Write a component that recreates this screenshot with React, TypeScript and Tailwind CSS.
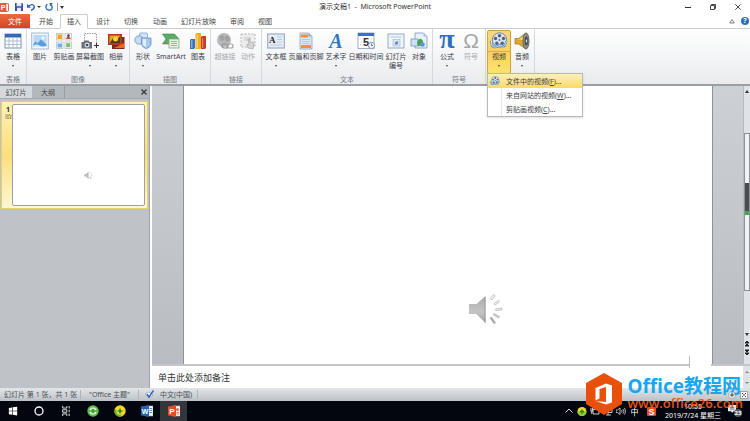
import type { ReactNode } from "react"
import clsx from "clsx"

type Tool = {
  label: string
  icon: ReactNode
  width: string
  arrow?: boolean
  disabled?: boolean
  active?: boolean
}

type Group = {
  name: string
  padding: string
  tools: Tool[]
}

const TableIcon = () => (
  <svg viewBox="0 0 18 18" className="h-full w-full">
    <rect x="1" y="2" width="16" height="14" fill="#fff" stroke="#7f93b8" />
    <rect x="1" y="2" width="16" height="3.5" fill="#3566b8" />
    <path d="M1 9h16M1 12.500h16M5 5.500v10.500M9 5.500v10.500M13 5.500v10.500" stroke="#9fb0cc" strokeWidth=".8" />
  </svg>
)

const PictureIcon = () => (
  <svg viewBox="0 0 18 18" className="h-full w-full">
    <rect x=".7" y="1" width="16.600" height="16" fill="#f2f6fa" stroke="#a9bccf" />
    <rect x="2.500" y="3" width="13" height="12" fill="#b4daf5" />
    <path d="M2.500 12l2-2.500 2 2 3.500-4 5.500 5v2.500h-13z" fill="#5b9bd8" />
    <path d="M2.500 13.500q3-2 6 0t7 0v1.500h-13z" fill="#dcecf8" />
    <circle cx="12" cy="6" r="1.500" fill="#fff" />
  </svg>
)

const ClipArtIcon = () => (
  <svg viewBox="0 0 18 18" className="h-full w-full">
    <g fill="#f7f8fa" stroke="#b4bac4" strokeWidth=".7">
      <rect x="1.500" y="1.500" width="6.500" height="6.500" />
      <rect x="10" y="1.500" width="6.500" height="6.500" />
      <rect x="1.500" y="10" width="6.500" height="6.500" />
      <rect x="10" y="10" width="6.500" height="6.500" />
    </g>
    <rect x="2.500" y="2.500" width="4.500" height="4.500" fill="#f0a818" />
    <path d="M11 7l2-4 3 4z" fill="#c0502c" />
    <circle cx="13.500" cy="3.500" r="1.200" fill="#404858" />
    <rect x="2.500" y="11.500" width="4.500" height="4" fill="#6fb0e4" />
    <rect x="11.200" y="11.200" width="4" height="4" fill="#7cbf6a" />
  </svg>
)

const ScreenshotIcon = () => (
  <svg viewBox="0 0 18 18" className="h-full w-full">
    <path d="M3.500 9V1.500h12V11" fill="none" stroke="#777" strokeWidth=".7" strokeDasharray="1.500 1" />
    <path d="M15.500 11v5M13 13.500h5" stroke="#333" strokeWidth="1.100" />
    <path d="M.5 10h2l1-1.500h4L8.500 10H11v6.500H.5z" fill="#6b7078" />
    <circle cx="6" cy="13" r="2.500" fill="#d7dde5" />
    <circle cx="6" cy="13" r="1.300" fill="#3e4d66" />
  </svg>
)

const AlbumIcon = () => (
  <svg viewBox="0 0 18 18" className="h-full w-full">
    <path d="M5 5h12.500v12H5z" fill="#7a2c14" />
    <path d="M1 2h14v11H1z" fill="#b5361c" />
    <path d="M2.500 3.500h11v8h-11z" fill="#e8a31c" />
    <path d="M2.500 11.500l4-6 3 3 4-5v8z" fill="#4a3a20" />
    <circle cx="8.500" cy="7" r="2.500" fill="#f9d331" />
    <path d="M7 16l10-5v5z" fill="#e46b1f" />
  </svg>
)

const ShapesIcon = () => (
  <svg viewBox="0 0 18 18" className="h-full w-full">
    <rect x="5.500" y="1" width="8" height="8" rx="1" fill="#d3e3f4" stroke="#7fa3cd" strokeWidth=".8" />
    <circle cx="5" cy="8" r="4.200" fill="#c4daf2" stroke="#6d97c8" strokeWidth=".8" />
    <path d="M7.500 6h9.500v6.500q-1 3-4.700 4.200-3.800-1.200-4.800-4.200z" fill="#a9c9ec" stroke="#5d8ac0" strokeWidth=".8" />
    <path d="M8.700 7h3.300v8q-2.800-1-3.300-3z" fill="#e2eefb" />
  </svg>
)

const SmartArtIcon = () => (
  <svg viewBox="0 0 18 18" className="h-full w-full">
    <path d="M.5 2h12l4.500 5-4.500 5H.5L4 7z" fill="#55ac63" stroke="#34894a" strokeWidth=".6" />
    <rect x="7" y="7" width="10" height="9" fill="#e7f2e5" stroke="#7eaa84" strokeWidth=".8" />
    <path d="M9 9.500h6M9 11.500h6M9 13.500h6" stroke="#86b58a" strokeWidth=".9" />
  </svg>
)

const ChartIcon = () => (
  <svg viewBox="0 0 18 18" className="h-full w-full">
    <path d="M1 8l1-1h4v9l-1 1H1z" fill="#3a6fc4" />
    <path d="M6.500 2l1-1H12v15l-1 1H6.500z" fill="#f0b01e" />
    <path d="M12 5l1-1h4v12l-1 1h-4z" fill="#c93a22" />
    <path d="M2 8h1.500v8H2zM7.500 3H9v13H7.500zM13 6h1.200v10H13z" fill="#fff" opacity=".4" />
  </svg>
)

const LinkIcon = () => (
  <svg viewBox="0 0 18 18" className="h-full w-full">
    <circle cx="8" cy="8" r="7" fill="#b8b8b8" />
    <path d="M3 5q4-4 5 0t-3 4zM9 4q4-1 5 4l-3 2q-3-2-2-6z" fill="#a2a2a2" />
    <rect x="6" y="12" width="6" height="4" rx="2" fill="none" stroke="#8d8d8d" strokeWidth="1.200" />
    <rect x="11" y="12" width="6" height="4" rx="2" fill="none" stroke="#a3a3a3" strokeWidth="1.200" />
  </svg>
)

const ActionIcon = () => (
  <svg viewBox="0 0 18 18" className="h-full w-full">
    <rect x="2" y="2" width="14" height="13" fill="#ededed" stroke="#b5b5b5" strokeDasharray="2 1.500" />
    <path d="M5 6h7M5 8h7" stroke="#c4c4c4" />
    <path d="M9 7l1 6-2-1 1 4 5 1 1-6-4-1V7z" fill="#d6d6d6" stroke="#a8a8a8" strokeWidth=".7" />
  </svg>
)

const TextBoxIcon = () => (
  <svg viewBox="0 0 18 18" className="h-full w-full">
    <rect x=".7" y="2" width="16.600" height="14" fill="#e6edf6" stroke="#8ba0bd" />
    <text x="2" y="11" fontSize="9" fontWeight="700" fontFamily="Liberation Serif, serif" fill="#222">A</text>
    <path d="M10 5h5M10 7.500h5M10 10h5M3 13h12" stroke="#b5c2d4" strokeWidth=".8" />
  </svg>
)

const HeaderFooterIcon = () => (
  <svg viewBox="0 0 18 18" className="h-full w-full">
    <path d="M3 1h8.500L15 4.500V17H3z" fill="#dbe6f3" stroke="#8ca2c0" strokeWidth=".8" />
    <path d="M4 2.500h7v3H4zM4 13h10v3H4z" fill="#ef9238" />
    <path d="M5 7.500h8M5 9.500h8M5 11.500h8" stroke="#a9bad0" strokeWidth=".7" />
    <path d="M11.500 1v3.500H15z" fill="#8ca6c8" />
  </svg>
)

const WordArtIcon = () => (
  <svg viewBox="0 0 18 18" className="h-full w-full overflow-visible">
    <text x="9" y="16" textAnchor="middle" fontSize="20" fontWeight="700" fontStyle="italic" fontFamily="Liberation Serif, serif" fill="#2f77c6">A</text>
  </svg>
)

const DateIcon = () => (
  <svg viewBox="0 0 18 18" className="h-full w-full">
    <rect x="1" y="1" width="16" height="15.500" fill="#fff" stroke="#8b9cb8" strokeWidth=".8" />
    <rect x="1" y="1" width="16" height="3" fill="#3b6fc2" />
    <path d="M3 7h12M3 10h12M3 13h12" stroke="#d8dee8" strokeWidth=".7" />
    <text x="6" y="14" fontSize="11" fontWeight="700" fontFamily="Liberation Sans, sans-serif" fill="#2b2f38">5</text>
    <circle cx="14.500" cy="13.500" r="3.200" fill="#eef2f8" stroke="#76839a" strokeWidth=".8" />
    <path d="M14.500 11.500v2h1.500" fill="none" stroke="#445" strokeWidth=".7" />
  </svg>
)

const SlideNumberIcon = () => (
  <svg viewBox="0 0 18 18" className="h-full w-full">
    <rect x="1" y="2" width="16" height="14" fill="#f1f5fa" stroke="#8ba3c6" strokeWidth=".9" />
    <path d="M3.500 5h11" stroke="#b7c6da" />
    <rect x="6" y="7.500" width="7" height="6.500" fill="#dbe6f4" stroke="#9db4d6" strokeWidth=".6" />
    <text x="9.500" y="13" textAnchor="middle" fontSize="6" fontWeight="700" fontFamily="Liberation Sans, sans-serif" fill="#305fae">#</text>
  </svg>
)

const ObjectIcon = () => (
  <svg viewBox="0 0 18 18" className="h-full w-full">
    <path d="M5 1h8.500L17 4.500V16H5z" fill="#e9f0f8" stroke="#7f98ba" strokeWidth=".8" />
    <path d="M13.500 1v3.500H17z" fill="#a8bedb" />
    <rect x="1" y="7" width="7" height="7" fill="#cfe2f4" stroke="#6f99c8" strokeWidth=".8" />
    <path d="M7 10q3-6 6-1 0 4-3 5t-3-4z" fill="#49a04f" />
    <circle cx="12.500" cy="12.500" r="2.300" fill="#5c93d4" />
  </svg>
)

const PiIcon = () => (
  <svg viewBox="0 0 18 18" className="h-full w-full overflow-visible">
    <text x="9" y="16" textAnchor="middle" fontSize="28" fontWeight="700" fontFamily="Liberation Serif, serif" fill="#2b73c2">π</text>
  </svg>
)

const OmegaIcon = () => (
  <svg viewBox="0 0 18 18" className="h-full w-full overflow-visible">
    <text x="9" y="16" textAnchor="middle" fontSize="21" fontFamily="Liberation Sans, sans-serif" fill="#a5a5a5">Ω</text>
  </svg>
)

const VideoIcon = () => (
  <svg viewBox="0 0 18 18" className="h-full w-full">
    <circle cx="9.500" cy="8" r="7.200" fill="#dce4ef" stroke="#6b7c98" strokeWidth=".9" />
    <g fill="#4e6388">
      <circle cx="9.500" cy="3.700" r="1.700" />
      <circle cx="13.500" cy="6.500" r="1.700" />
      <circle cx="12.200" cy="11.200" r="1.700" />
      <circle cx="6.800" cy="11.200" r="1.700" />
      <circle cx="5.500" cy="6.500" r="1.700" />
      <circle cx="9.500" cy="8" r=".9" />
    </g>
    <path d="M1.500 9q-1 7 5 6 4-3 6-1t4-5" fill="none" stroke="#3d87c9" strokeWidth="2.200" />
    <path d="M1.500 9q-1 7 5 6 4-3 6-1t4-5" fill="none" stroke="#d4e8f7" strokeWidth="1" />
  </svg>
)

const AudioIcon = () => (
  <svg viewBox="0 0 18 18" className="h-full w-full">
    <path d="M2 6.500h3.500L13 1v16l-7.500-5H2z" fill="#dca92d" stroke="#9b762a" strokeWidth=".7" />
    <path d="M3 7.500h3l6-4.500v5z" fill="#f8dd86" />
    <ellipse cx="13" cy="9" rx="3" ry="8" fill="#8f8f8f" stroke="#555" strokeWidth=".8" />
    <ellipse cx="13.300" cy="9" rx="1.600" ry="4.500" fill="#4a4a4a" />
    <ellipse cx="13.500" cy="9" rx=".7" ry="1.800" fill="#ddd" />
  </svg>
)

const SpeakerIcon = ({ className }: { className?: string }) => (
  <svg viewBox="0 0 36 36" className={className}>
    <defs>
      <linearGradient id="cone" x1="0" y1="0" x2="0" y2="1">
        <stop offset="0" stopColor="#adadad" />
        <stop offset=".6" stopColor="#c4c4c4" />
        <stop offset="1" stopColor="#9c9c9c" />
      </linearGradient>
    </defs>
    <path d="M1 12h7.500L17.500 4v27L8.500 22H1z" fill="url(#cone)" />
    <path d="M17 5v25.500" stroke="#999" />
    <g fill="#f4f4f4" stroke="#b8b8b8" strokeWidth=".8">
      <path d="M22 6.500l3.500-4 1.500 1-3 4.500z" />
      <path d="M26 11.500l4.500-3 1 1.500-4.500 3z" />
      <path d="M27.500 17l6-1 .3 2-6 .5z" />
      <path d="M26 21.500l5.500 3-1 1.500-5-3z" fill="#ccc" />
      <path d="M22 26l1.500-.8 4 5.500-1.500 1z" fill="#999" />
    </g>
  </svg>
)

const tabs = ["开始", "插入", "设计", "切换", "动画", "幻灯片放映", "审阅", "视图"]

const groups: Group[] = [
  {
    name: "表格",
    padding: "px-px",
    tools: [{ label: "表格", icon: <TableIcon />, width: "w-6", arrow: true }],
  },
  {
    name: "图像",
    padding: "px-px",
    tools: [
      { label: "图片", icon: <PictureIcon />, width: "w-6" },
      { label: "剪贴画", icon: <ClipArtIcon />, width: "w-6" },
      { label: "屏幕截图", icon: <ScreenshotIcon />, width: "w-7", arrow: true },
      { label: "相册", icon: <AlbumIcon />, width: "w-6", arrow: true },
    ],
  },
  {
    name: "插图",
    padding: "px-px",
    tools: [
      { label: "形状", icon: <ShapesIcon />, width: "w-6", arrow: true },
      { label: "SmartArt", icon: <SmartArtIcon />, width: "w-8" },
      { label: "图表", icon: <ChartIcon />, width: "w-[22px]" },
    ],
  },
  {
    name: "链接",
    padding: "px-0.5",
    tools: [
      { label: "超链接", icon: <LinkIcon />, width: "w-6", disabled: true },
      { label: "动作", icon: <ActionIcon />, width: "w-[22px]", disabled: true },
    ],
  },
  {
    name: "文本",
    padding: "px-0.5",
    tools: [
      { label: "文本框", icon: <TextBoxIcon />, width: "w-6", arrow: true },
      { label: "页眉和页脚", icon: <HeaderFooterIcon />, width: "w-9" },
      { label: "艺术字", icon: <WordArtIcon />, width: "w-6", arrow: true },
      { label: "日期和时间", icon: <DateIcon />, width: "w-9" },
      { label: "幻灯片编号", icon: <SlideNumberIcon />, width: "w-6" },
      { label: "对象", icon: <ObjectIcon />, width: "w-[22px]" },
    ],
  },
  {
    name: "符号",
    padding: "px-0.5",
    tools: [
      { label: "公式", icon: <PiIcon />, width: "w-6", arrow: true },
      { label: "符号", icon: <OmegaIcon />, width: "w-6", disabled: true },
    ],
  },
]

const videoMenu = [
  { text: "文件中的视频", hotkey: "F", active: true },
  { text: "来自网站的视频", hotkey: "W" },
  { text: "剪贴画视频", hotkey: "C" },
]

const ToolButton = ({ label, icon, width, arrow, disabled, active }: Tool) => (
  <button
    type="button"
    disabled={disabled}
    className={clsx(
      "flex h-11 shrink-0 flex-col items-center rounded-xs border pt-px",
      width,
      active ? "border-[#d3a03a] bg-linear-to-b from-[#fbd77c] via-[#fbd05f] to-[#fde46e]" : "border-transparent",
      disabled ? "text-[#a5a8ad]" : "text-[#3c4047]"
    )}
  >
    <span className={clsx("flex h-5 w-full justify-center border-b", active ? "border-[#dcae45]" : "border-transparent")}>
      <span className="block size-[18px] shrink-0">{icon}</span>
    </span>
    <span className={clsx("flex justify-center text-center leading-[9px]", label === "幻灯片编号" ? "w-[22px] shrink-0" : "whitespace-nowrap")}>
      {label}
    </span>
    {arrow && <span className="mt-1 border-x border-t-2 border-x-transparent border-t-[#444]" />}
  </button>
)

const TitleBar = () => (
  <header className="relative flex h-[14px] shrink-0 items-center bg-white">
    <div className="flex items-center gap-1">
      <svg viewBox="0 0 10 10" className="mr-0.5 size-[9px]">
        <rect x=".5" y=".5" width="9" height="9" rx="1" fill="#fff" stroke="#d24a26" />
        <rect width="7" height="10" rx="1" fill="#dd5a35" />
        <text x="3.500" y="8" textAnchor="middle" fontSize="8" fontWeight="700" fontFamily="Liberation Sans, sans-serif" fill="#fff">P</text>
      </svg>
      <button type="button" aria-label="保存">
        <svg viewBox="0 0 10 10" className="size-2">
          <path d="M0 0h9l1 1v9H0z" fill="#3a4fa8" />
          <path d="M2 0h6v4H2zM2.500 6h5v4h-5z" fill="#e6eaf6" />
        </svg>
      </button>
      <button type="button" aria-label="撤消" className="flex items-center gap-0.5">
        <svg viewBox="0 0 10 10" className="size-2">
          <path d="M2 4q5-4 7 0 .5 4-4 5" fill="none" stroke="#2d5fb8" strokeWidth="1.800" />
          <path d="M0 1v5h5z" fill="#2d5fb8" />
        </svg>
        <span className="border-x-2 border-t-2 border-x-transparent border-t-[#333]" />
      </button>
      <button type="button" aria-label="恢复">
        <svg viewBox="0 0 10 10" className="size-2">
          <path d="M3 1.500Q0 4 2 7.500q3.500 3 6.500 0Q10 4 7 2" fill="none" stroke="#2d6fc4" strokeWidth="1.700" />
          <path d="M5.500 0H10L6.500 4z" fill="#2d6fc4" />
        </svg>
      </button>
      <span className="flex h-2 items-center border-l border-[#999] pl-0.5">
        <span className="border-x-2 border-t-[3px] border-x-transparent border-t-[#333]" />
      </span>
    </div>
    <h1 className="absolute inset-x-0 text-center text-[7px] leading-[14px] text-[#333]">演示文稿1&nbsp; -&nbsp; Microsoft PowerPoint</h1>
    <div className="relative ml-auto flex items-center gap-[19px] pr-[9px]">
      <button type="button" aria-label="最小化" className="h-px w-1.5 bg-[#333]" />
      <button type="button" aria-label="还原">
        <svg viewBox="0 0 6 6" className="size-1.5">
          <path d="M.5 1.500h4v4h-4zM1.500 1.500v-1h4v4h-1" fill="none" stroke="#333" strokeWidth=".9" />
        </svg>
      </button>
      <button type="button" aria-label="关闭">
        <svg viewBox="0 0 6 6" className="size-1.5">
          <path d="M.3.3l5.400 5.400M5.700.3L.3 5.700" stroke="#333" strokeWidth=".9" />
        </svg>
      </button>
    </div>
  </header>
)

const TabRow = () => (
  <nav className="flex h-[15px] shrink-0 items-stretch border-b border-[#c9ccd1] bg-white text-[#444]">
    <button type="button" className="mr-0.5 w-[30px] bg-linear-to-b from-[#ea6a43] to-[#d4431c] text-white">文件</button>
    {tabs.map((tab) => (
      <button
        key={tab}
        type="button"
        className={clsx(
          "border px-[6px]",
          tab === "插入" ? "mr-px -mb-px rounded-t-xs border-[#c9ccd1] border-b-white bg-white" : "border-transparent",
          tab === "动画" && "ml-px"
        )}
      >
        {tab}
      </button>
    ))}
    <div className="ml-auto flex items-center gap-1.5 pr-px">
      <svg viewBox="0 0 6 6" className="size-1.5">
        <path d="M.8 5L3 1.500 5.200 5z" fill="none" stroke="#666" strokeWidth=".8" />
      </svg>
      <button type="button" aria-label="帮助" className="size-2 rounded-full bg-[#2f6fcb] text-[7px] leading-2 font-bold text-white">?</button>
    </div>
  </nav>
)

const VideoMenu = () => (
  <div role="menu" className="absolute top-[43px] left-0 z-20 w-24 border border-[#b5b8be] bg-white shadow-sm">
    {videoMenu.map((item) => (
      <button
        key={item.text}
        type="button"
        role="menuitem"
        className={clsx(
          "flex h-[14px] w-full items-center text-[#3c4047]",
          item.active && "bg-linear-to-b from-[#fdf0b8] to-[#fbd966]"
        )}
      >
        <span className={clsx("flex h-full w-[14px] items-center justify-center", !item.active && "border-r border-[#e3e5e8]")}>
          {item.active && <span className="size-[10px]"><VideoIcon /></span>}
        </span>
        <span className="ml-1">{item.text}(<u>{item.hotkey}</u>)...</span>
      </button>
    ))}
  </div>
)

const Ribbon = () => (
  <section className="flex h-[57px] shrink-0 items-stretch border-b-2 border-[#9a9fa6] bg-linear-to-b from-white to-[#e9ebee]">
    {groups.map((group) => (
      <div key={group.name} className={clsx("flex flex-col border-r border-[#d5d8dc]", group.padding)}>
        <div className="flex pt-px">
          {group.tools.map((tool) => <ToolButton key={tool.label} {...tool} />)}
        </div>
        <p className="mt-auto text-center leading-[11px] text-[#777b82]">{group.name}</p>
      </div>
    ))}
    <div className="border-r border-[#d5d8dc] px-px pt-px">
      <div className="relative flex">
        <ToolButton label="视频" icon={<VideoIcon />} width="w-6" arrow active />
        <ToolButton label="音频" icon={<AudioIcon />} width="w-[22px]" arrow />
        <VideoMenu />
      </div>
    </div>
  </section>
)

const SlidePanel = () => (
  <aside className="flex w-[150px] shrink-0 flex-col border-r border-[#9ea3a8] bg-[#bfc3c7]">
    <div className="flex h-[13px] items-stretch border-b border-[#a4a9ae] bg-[#b3b8bd] text-[#444]">
      <button type="button" className="w-8 bg-[#d5d9dd]">幻灯片</button>
      <button type="button" className="w-[33px] border-r border-[#9a9fa4]">大纲</button>
      <button type="button" aria-label="关闭窗格" className="mr-0.5 ml-auto">
        <svg viewBox="0 0 6 6" className="size-1.5">
          <path d="M.5.500l5 5M5.500.500l-5 5" stroke="#333" strokeWidth="1.200" />
        </svg>
      </button>
    </div>
    <div className="mx-px mt-0.5 flex border border-[#e9cf6a] bg-linear-to-b from-[#fff3b4] via-[#fbdf7c] to-[#fff8d0] p-0.5">
      <div className="flex w-2 shrink-0 flex-col items-center pt-px text-[#333]">
        <span className="leading-[9px] font-bold">1</span>
        <svg viewBox="0 0 8 6" className="h-[5px] w-[7px]">
          <path d="M0 1h3M0 3h2M0 5h3M5 0l1 2h2L6.500 3.500 7 6 5 4.500 3 6l.5-2.500L2.500 2h2z" fill="none" stroke="#555" strokeWidth=".6" />
        </svg>
      </div>
      <div className="flex h-[102px] flex-1 items-start rounded-xs border border-[#9da0a6] bg-white">
        <SpeakerIcon className="mt-[66px] ml-[71px] size-[9px]" />
      </div>
    </div>
  </aside>
)

const ScrollBar = () => (
  <div className="flex w-[7px] shrink-0 flex-col items-center border-l border-[#b5b9be] bg-[#dfe3e8] text-[#333]">
    <span className="mt-1 border-x-2 border-b-[3px] border-x-transparent border-b-[#333]" />
    <div className="mt-10 flex w-full flex-1 flex-col border border-[#8c9299] bg-[#f0f2f6]">
      <div className="mt-[49px] h-8 w-full border-b-4 border-[#3fa653] bg-[#4a4c50]" />
    </div>
    <span className="mt-[42px] border-x-2 border-t-[3px] border-x-transparent border-t-[#333]" />
    <svg viewBox="0 0 6 16" className="mt-1 mb-2 h-4 w-1.5">
      <path d="M1 3l2-2 2 2zM1 6l2-2 2 2zM1 10h4l-2 2zM1 13h4l-2 2z" fill="#222" stroke="#222" />
    </svg>
  </div>
)

const Editor = () => (
  <main className="flex min-w-0 flex-1 flex-col border-l-2 border-white">
    <div className="flex min-h-0 flex-1">
      <div className="flex min-w-0 flex-1 bg-linear-to-b from-[#cdd1d5] to-[#b9bdc1] pr-[30px] pl-[31px]">
        <div className="flex flex-1 items-end justify-end border-x border-[#8e9297] bg-white">
          <SpeakerIcon className="mr-[208px] mb-9 size-9" />
        </div>
      </div>
      <ScrollBar />
    </div>
    <div className="relative flex h-6 shrink-0 border-t-2 border-[#c3c6ca] bg-white">
      <textarea
        aria-label="备注"
        defaultValue="单击此处添加备注"
        className="h-full w-full resize-none overflow-hidden px-1.5 pt-[5px] text-[9px] leading-[14px] text-[#333] outline-none"
      />
      <div className="flex w-[7px] shrink-0 flex-col items-center justify-around bg-[#dfe3e8]">
        <span className="border-x-2 border-b-2 border-x-transparent border-b-[#888]" />
        <span className="border-x-2 border-t-2 border-x-transparent border-t-[#888]" />
      </div>
      <span className="absolute right-[39px] bottom-[20px] h-3 w-[22px] border-l border-[#b9bcc0] bg-white" />
    </div>
  </main>
)

const StatusBar = () => (
  <footer className="flex h-[13px] shrink-0 items-center bg-linear-to-b from-[#e3e6e9] to-[#bcc1c6] pl-1 text-[#4b4f55]">
    <span className="w-[77px] border-r border-[#b0b4b9] whitespace-nowrap">幻灯片 第 1 张，共 1 张</span>
    <span className="w-[58px] border-r border-[#b0b4b9] text-center">"Office 主题"</span>
    <span className="flex w-[59px] items-center gap-1.5 border-r border-[#b0b4b9] pl-1.5">
      <svg viewBox="0 0 9 9" className="size-[9px] shrink-0">
        <path d="M0 4l4-2 4 3-4 3z" fill="#fff" stroke="#7f8fae" strokeWidth=".6" />
        <path d="M2 4l2 3 4.500-6.500" fill="none" stroke="#2f5fc0" strokeWidth="1.400" />
      </svg>
      <span className="whitespace-nowrap">中文(中国)</span>
    </span>
    <span className="ml-auto flex items-center gap-1 pr-0.5">
      <svg viewBox="0 0 8 8" className="size-2">
        <circle cx="4" cy="4" r="3.500" fill="#f4f4f4" stroke="#888" strokeWidth=".6" />
        <path d="M2 4h4M4 2v4" stroke="#444" />
      </svg>
      <svg viewBox="0 0 8 8" className="size-2">
        <rect x=".5" y=".5" width="7" height="7" fill="#fff" stroke="#888" strokeWidth=".7" />
        <path d="M2 2l1.500 1.500M6 2L4.500 3.500M2 6l1.500-1.500M6 6L4.500 4.500" stroke="#444" />
      </svg>
    </span>
  </footer>
)

const launchers = [
  {
    name: "开始",
    icon: <path d="M1 2.300l4-.6v4H1zM5.700 1.600L11 .8v4.900H5.700zM1 6.400h4v4l-4-.6zM5.700 6.400H11v4.900l-5.300-.8z" fill="#fff" />,
  },
  { name: "Cortana", icon: <circle cx="6" cy="6" r="4" fill="none" stroke="#fff" strokeWidth="1.300" /> },
  {
    name: "任务视图",
    icon: <path d="M2 0v2.500h5V0M2 12V9.500h5V12M2 4.500h5v3H2zM9.800 0v3M9.800 4.500v3M9.800 9v3" fill="none" stroke="#eee" strokeWidth="1.100" />,
  },
  {
    name: "浏览器",
    icon: (
      <>
        <circle cx="6" cy="6" r="5.700" fill="#5cc044" />
        <circle cx="6" cy="6" r="3.600" fill="#f2fbef" />
        <path d="M2 6h8M4.500 4.500h3M4.500 7.500h3" stroke="#43a332" strokeWidth="1.300" />
      </>
    ),
  },
  {
    name: "安全卫士",
    icon: (
      <>
        <circle cx="6" cy="6" r="5.700" fill="#f6d21c" />
        <path d="M.3 6a5.700 5.700 0 005.700 5.700L9 8 3 4z" fill="#54b13b" />
        <circle cx="6" cy="6" r="3.700" fill="#f6df2e" />
        <path d="M6 3.500v5M3.500 6h5" stroke="#2b8b2d" strokeWidth="1.700" />
      </>
    ),
  },
  {
    name: "Word",
    icon: (
      <>
        <path d="M5 1h7v10H5z" fill="#fff" stroke="#8aa9d8" strokeWidth=".6" />
        <path d="M8.500 3.500h2.500M8.500 5.500h2.500M8.500 7.500h2.500" stroke="#2b5fae" strokeWidth=".8" />
        <path d="M0 1.500L8 .3v11.400L0 10.500z" fill="#2a63b8" />
        <text x="4" y="8.500" textAnchor="middle" fontSize="7" fontWeight="700" fontFamily="Liberation Sans, sans-serif" fill="#fff">W</text>
      </>
    ),
  },
  {
    name: "PowerPoint",
    active: true,
    icon: (
      <>
        <path d="M5 1h7v10H5z" fill="#fff" stroke="#e5a48d" strokeWidth=".6" />
        <path d="M8.500 7.500h2.500M8.500 9h2.500" stroke="#d2502c" strokeWidth=".8" />
        <circle cx="9.500" cy="4.500" r="1.500" fill="#e4704c" />
        <path d="M0 1.500L8 .3v11.400L0 10.500z" fill="#d9502a" />
        <text x="4" y="9" textAnchor="middle" fontSize="8" fontWeight="700" fontFamily="Liberation Sans, sans-serif" fill="#fff">P</text>
      </>
    ),
  },
]

const TaskBar = () => (
  <footer className="flex h-5 shrink-0 items-stretch bg-[#04060f] text-white">
    {launchers.map((item) => (
      <button
        key={item.name}
        type="button"
        aria-label={item.name}
        className={clsx(
          "flex items-center justify-center",
          item.name === "开始" ? "w-[25px]" : "w-[27px]",
          item.active && "bg-[#34363d]"
        )}
      >
        <svg viewBox="0 0 12 12" className={clsx(item.name === "开始" || item.name === "任务视图" ? "size-[10px]" : "size-3")}>{item.icon}</svg>
      </button>
    ))}
    <div className="ml-auto flex items-center gap-[3px]">
      <svg viewBox="0 0 10 10" className="size-[10px]">
        <path d="M1.500 6.500L5 3l3.500 3.500" fill="none" stroke="#ddd" />
      </svg>
      <svg viewBox="0 0 10 10" className="size-[10px]">
        <circle cx="5" cy="5.500" r="4.500" fill="#e8df24" />
        <path d="M.5 5.500a4.500 4.500 0 009 0z" fill="#8ac43a" />
        <path d="M5 3.500v4M3 5.500h4" stroke="#23792a" strokeWidth="1.300" />
      </svg>
      <svg viewBox="0 0 10 10" className="size-[10px]">
        <path d="M3 3.500h6v4.500H3zM1 2v3M2.500 2v3M.5 5h2.500M1.700 5v3" fill="none" stroke="#ddd" strokeWidth=".9" />
      </svg>
      <svg viewBox="0 0 10 10" className="size-[10px]">
        <path d="M1 1.500h8v5H1zM5 6.500V9M3 9h5" fill="none" stroke="#ddd" strokeWidth=".9" />
      </svg>
      <svg viewBox="0 0 10 10" className="size-[10px]">
        <path d="M0 4h1.500L4 2v6.500L1.500 6.500H0zM5.500 4q1 1.200 0 2.500M7 3q2 2.200 0 4.500M8.500 2q2.500 3.200 0 6.500" fill="none" stroke="#ddd" strokeWidth=".8" />
      </svg>
      <span className="w-[11px] text-center text-[8px]">中</span>
      <svg viewBox="0 0 10 10" className="ml-1 size-[9px]">
        <rect width="10" height="10" rx="1.500" fill="#e8481e" />
        <text x="5" y="8.500" textAnchor="middle" fontSize="10" fontWeight="700" fontFamily="Liberation Sans, sans-serif" fill="#fff">S</text>
      </svg>
      <div className="ml-1.5 w-14 text-center leading-[9px] whitespace-nowrap">
        <p>10:55</p>
        <p>2019/7/24 星期三</p>
      </div>
      <div className="relative mr-2 ml-1 h-3 w-[14px]">
        <svg viewBox="0 0 10 10" className="size-[9px]">
          <path d="M0 0h9v7H6L4.500 9 3.500 7H0z" fill="#eee" />
          <path d="M2 2.500h5M2 4.500h5" stroke="#333" strokeWidth=".8" />
        </svg>
        <span className="absolute right-0 bottom-0 size-2 rounded-full bg-[#555960] text-center text-[6px] leading-2 font-bold">23</span>
      </div>
    </div>
  </footer>
)

const Watermark = () => (
  <div className="absolute right-[7px] bottom-1.5 z-30 flex items-center gap-1.5">
    <svg viewBox="0 0 36 42" className="h-[42px] w-9">
      <path d="M18 0l18 10v21L18 42 0 31V10z" fill="#e8500c" />
      <path d="M9.500 15L20 10.500l6 2v17L20 31.500 9.500 28l10.500 1V14l-6.500 2v9.500l-4 2z" fill="#fff" />
    </svg>
    <div className="whitespace-nowrap">
      <p className="text-[19px] leading-[18px] font-bold text-[#1ba5ee]">Office教程网</p>
      <p className="font-['Open_Sans',sans-serif] text-[13px] leading-4 font-semibold text-[#e8540f]">www.office26.com</p>
    </div>
  </div>
)

const App = () => {
  return (
    <div className="relative flex h-screen min-h-[400px] flex-col overflow-hidden bg-white font-['Noto_Sans','Noto_Sans_CJK_SC',sans-serif] text-[7px] leading-[9px]">
      <TitleBar />
      <TabRow />
      <Ribbon />
      <div className="flex min-h-0 flex-1">
        <SlidePanel />
        <Editor />
      </div>
      <StatusBar />
      <TaskBar />
      <Watermark />
    </div>
  )
}

export default App
